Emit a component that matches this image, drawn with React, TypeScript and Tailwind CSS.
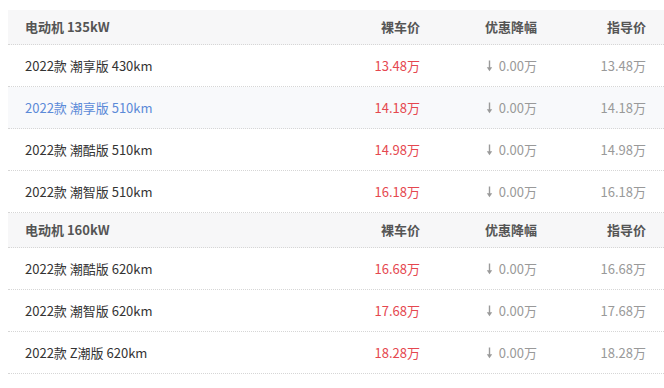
import React from 'react';

// --- TYPE DEFINITIONS ---
interface Trim {
  name: string;
  price: string;
  discount: string;
  guide: string;
  active?: boolean;
}
interface Group {
  title: string;
  trims: Trim[];
}

const GROUPS: Group[] = [
  {
    title: '电动机 135kW',
    trims: [
      { name: '2022款 潮享版 430km', price: '13.48万', discount: '0.00万', guide: '13.48万' },
      { name: '2022款 潮享版 510km', price: '14.18万', discount: '0.00万', guide: '14.18万', active: true },
      { name: '2022款 潮酷版 510km', price: '14.98万', discount: '0.00万', guide: '14.98万' },
      { name: '2022款 潮智版 510km', price: '16.18万', discount: '0.00万', guide: '16.18万' },
    ],
  },
  {
    title: '电动机 160kW',
    trims: [
      { name: '2022款 潮酷版 620km', price: '16.68万', discount: '0.00万', guide: '16.68万' },
      { name: '2022款 潮智版 620km', price: '17.68万', discount: '0.00万', guide: '17.68万' },
      { name: '2022款 Z潮版 620km', price: '18.28万', discount: '0.00万', guide: '18.28万' },
    ],
  },
];

const FONT = { fontFamily: '"Noto Sans CJK SC", "Noto Sans", sans-serif' };

const DownArrow = () => (
  <svg width="7" height="12" viewBox="0 0 7 12" className="mr-[6px]">
    <path d="M3.5 0.5V9" stroke="#9a9a9a" strokeWidth="1.4" fill="none" />
    <path d="M0.8 7.2L3.5 11.2L6.2 7.2Z" fill="#9a9a9a" />
  </svg>
);

const HeaderRow = ({ title }: { title: string }) => (
  <div className="flex items-center h-[35px] bg-[#f7f7f8] border-b border-dotted border-[#d6d6d6] text-[13px] font-bold text-[#555]">
    <div className="flex-1 pl-[17px]">{title}</div>
    <div className="w-[120px] text-right">裸车价</div>
    <div className="w-[117px] text-right">优惠降幅</div>
    <div className="w-[127px] pr-[18px] text-right">指导价</div>
  </div>
);

const TrimRow = ({ trim }: { trim: Trim }) => (
  <div
    className={`flex items-center h-[42px] border-b border-dotted border-[#d6d6d6] text-[13px] ${
      trim.active ? 'bg-[#f8f9fb]' : 'bg-white'
    }`}
  >
    <div className={`flex-1 pl-[17px] ${trim.active ? 'text-[#5b8ad8]' : 'text-[#333]'}`}>{trim.name}</div>
    <div className="w-[120px] text-right text-[#e5474f]">{trim.price}</div>
    <div className="w-[117px] flex items-center justify-end text-[#999]">
      <DownArrow />
      {trim.discount}
    </div>
    <div className="w-[127px] pr-[18px] text-right text-[#999]">{trim.guide}</div>
  </div>
);

export default function App() {
  return (
    <div className="w-[664px] h-[388px] bg-white overflow-hidden pt-[10px] pl-[8px]" style={FONT}>
      {GROUPS.map((g) => (
        <div key={g.title}>
          <HeaderRow title={g.title} />
          {g.trims.map((t) => (
            <TrimRow key={t.name} trim={t} />
          ))}
        </div>
      ))}
    </div>
  );
}
